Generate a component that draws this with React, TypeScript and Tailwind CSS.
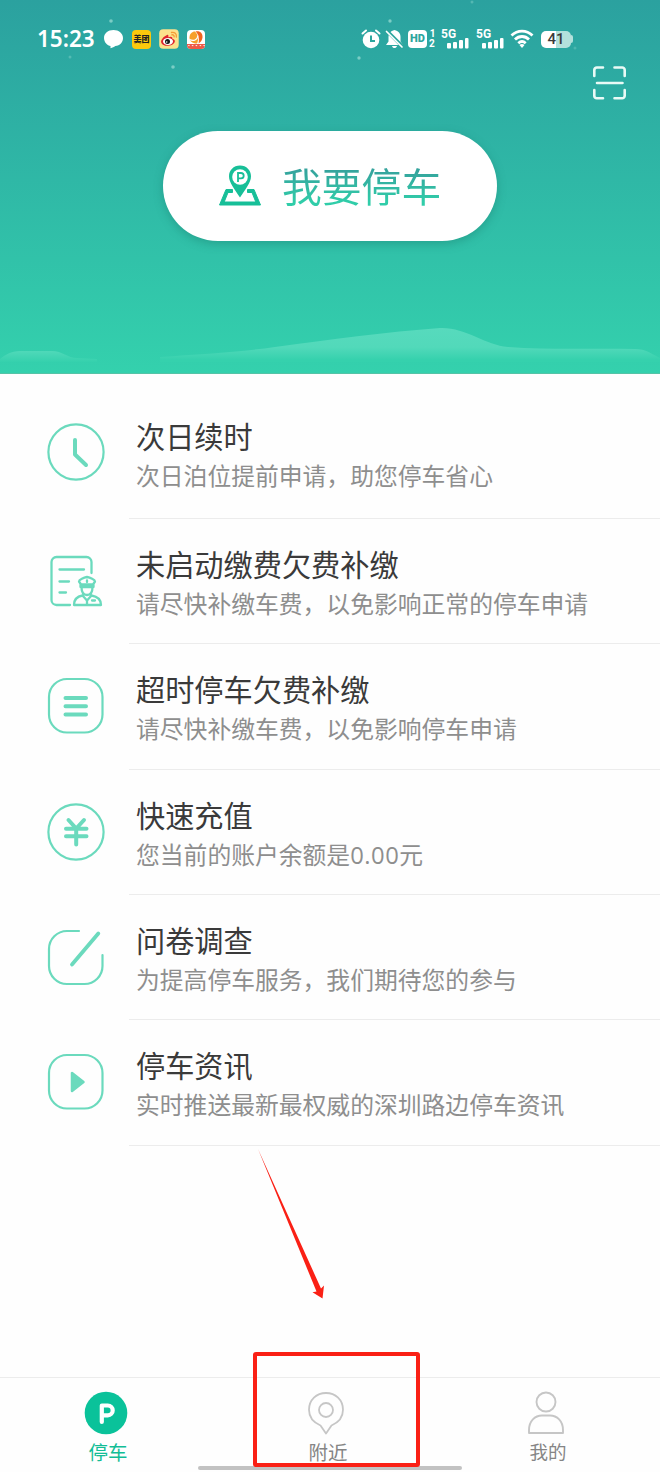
import React from "react";

type MenuItem = {
  id: string;
  title: string;
  desc: React.ReactNode;
  icon: React.ReactNode;
};

const MINT = "#6bdabd";

function ClockIcon() {
  return (
    <svg width="58" height="58" viewBox="0 0 58 58" fill="none" stroke={MINT}>
      <circle cx="29" cy="29" r="27.600" strokeWidth="2.200" />
      <path d="M28 17v14.500l11 10.500" strokeWidth="4" strokeLinecap="round" strokeLinejoin="round" />
    </svg>
  );
}

function OfficerIcon() {
  return (
    <svg width="58" height="58" viewBox="0 0 58 58" fill="none" stroke={MINT} strokeWidth="2.300" strokeLinecap="round" strokeLinejoin="round">
      <path d="M44.500 21V10a5 5 0 0 0-5-5H9.500a5 5 0 0 0-5 5v38a5 5 0 0 0 5 5H23" />
      <path d="M12.500 17.500H37M12.500 29.500h9.500M12.500 40.500h6.500" />
      {/* officer */}
      <path d="M32 29.500c0-2 5-4 8-4.500 3 .5 8 2.500 8 4.500l-2 3H34zM33.500 32.500h13v2.500h-13zM34.500 35c0 5 2 8 5.500 8s5.500-3 5.500-8M27 53c0-6 3-8.500 8.500-9.500L40 48.500l4.500-5c5.500 1 9.500 3.500 9.500 9.500z" />
      <path d="M40 28.500v1.500M40 48.500v3.500M45 48.500h3" />
    </svg>
  );
}

function ListIcon() {
  return (
    <svg width="58" height="58" viewBox="0 0 58 58" fill="none" stroke={MINT}>
      <rect x="2" y="2" width="53.500" height="53.500" rx="18" strokeWidth="2.200" />
      <path d="M18.500 21H39M18.500 29.300H39M18.500 37.500H39" strokeWidth="4" strokeLinecap="round" />
    </svg>
  );
}

function YuanIcon() {
  return (
    <svg width="58" height="58" viewBox="0 0 58 58" fill="none" stroke={MINT}>
      <circle cx="29" cy="29" r="27.600" strokeWidth="2.200" />
      <path d="M21.500 17l7.700 8.500L37 17M19 25.800h20.500M19 33.200h20.500M29.200 26v15.500" strokeWidth="4" strokeLinecap="round" strokeLinejoin="round" />
    </svg>
  );
}

function SurveyIcon() {
  return (
    <svg width="58" height="58" viewBox="0 0 58 58" fill="none" stroke={MINT} strokeLinecap="round">
      <path d="M32 3H20A18 18 0 0 0 2 21v17a18 18 0 0 0 18 18h17.500a18 18 0 0 0 18-18V27" strokeWidth="2.200" />
      <path d="M51.300 5.500L25 36.500" strokeWidth="3.800" />
    </svg>
  );
}

function NewsIcon() {
  return (
    <svg width="58" height="58" viewBox="0 0 58 58" fill="none" stroke={MINT}>
      <rect x="2" y="2" width="53.500" height="53.500" rx="18" strokeWidth="2.200" />
      <path d="M25 20v18l11.500-9z" fill={MINT} strokeWidth="2.500" strokeLinejoin="round" />
    </svg>
  );
}

const menu: MenuItem[] = [
  { id: "renew", title: "次日续时", desc: "次日泊位提前申请，助您停车省心", icon: <ClockIcon /> },
  { id: "unstarted", title: "未启动缴费欠费补缴", desc: "请尽快补缴车费，以免影响正常的停车申请", icon: <OfficerIcon /> },
  { id: "overtime", title: "超时停车欠费补缴", desc: "请尽快补缴车费，以免影响停车申请", icon: <ListIcon /> },
  {
    id: "recharge",
    title: "快速充值",
    desc: (
      <>
        您当前的账户余额是<span className="font-['Open_Sans',sans-serif] tracking-[0.5px]">0.00</span>元
      </>
    ),
    icon: <YuanIcon />,
  },
  { id: "survey", title: "问卷调查", desc: "为提高停车服务，我们期待您的参与", icon: <SurveyIcon /> },
  { id: "news", title: "停车资讯", desc: "实时推送最新最权威的深圳路边停车资讯", icon: <NewsIcon /> },
];

function Signal() {
  return (
    <div className="relative h-5 w-[28px]">
      <span className="absolute left-0 top-0 font-['Roboto',sans-serif] text-[12px] font-bold leading-[10px]">5G</span>
      <svg className="absolute bottom-0 right-0" width="22" height="12" viewBox="0 0 22 12" fill="#fff">
        <rect x="0" y="6" width="4" height="5.500" rx="1" />
        <rect x="6" y="5" width="4" height="6.500" rx="1" />
        <rect x="12" y="3" width="4" height="8.500" rx="1" />
        <rect x="18" y="1" width="3.500" height="10.500" rx="1" />
      </svg>
    </div>
  );
}

function StatusBar() {
  return (
    <div className="flex h-[78px] items-center pl-[37px] text-white">
      <span className="w-[66px] font-['Noto_Sans',sans-serif] text-[22.500px] font-semibold leading-6">15:23</span>
      <svg width="21" height="20" viewBox="0 0 21 20" fill="#fff">
        <path d="M10.500 1C5 1 1 4.400 1 9c0 4.500 3.500 7.500 6.500 8v2.200c2-.5 3.500-1.200 4.800-2.200C17 16.600 20 13.200 20 9c0-4.600-4.200-8-9.500-8z" />
      </svg>
      <div className="ml-2 flex h-[19px] w-[19px] items-center justify-center rounded bg-[#fbc80c]">
        <span className="whitespace-nowrap font-['Noto_Sans_CJK_SC',sans-serif] text-[8px] font-black leading-none text-[#222]">美团</span>
      </div>
      <svg className="ml-2" width="20" height="20" viewBox="0 0 20 20">
        <rect width="19.500" height="19.500" x=".2" y=".2" rx="4" fill="#fce28c" />
        <path d="M8 6c-3.500 1.500-6.500 5-5.800 7.500.6 2.500 4 3.500 7 3.300 4-.3 7-2.600 6.600-5-.2-1.200-1.500-1.800-2.500-2 .5-2-1.500-2.500-4-1.500C9.700 6.500 9.300 5.500 8 6z" fill="#e0252c" />
        <ellipse cx="9" cy="12.500" rx="5" ry="3.400" fill="#fff" />
        <circle cx="8.500" cy="12.600" r="2.500" fill="#171717" />
        <circle cx="7.700" cy="13" r=".8" fill="#fff" />
        <path d="M12.500 3.500c3-.8 5.500 1.500 4.800 4.500M12.800 5.800c1.500-.3 2.600.8 2.300 2" stroke="#f39b35" strokeWidth="1.300" fill="none" strokeLinecap="round" />
      </svg>
      <div className="relative ml-[8px] h-[19px] w-[18px] overflow-hidden rounded bg-white">
        <svg width="18" height="14" viewBox="0 0 18 14">
          <path d="M8.500 1.500c4.500-1 7.500 2 7 6-.3 2.500-1.500 4.500-4 6C12.500 9 11.500 4 8.500 1.500z" fill="#f0651f" />
          <path d="M8 1.500c3 3 4 8 2 12C5 13.500 2.500 11 2.500 7.500 2.500 4 5 1.500 8 1.500z" fill="#f6a02b" />
          <path d="M2.500 9.500c4 2 8 .5 8.500-4" stroke="#fff" strokeWidth="1.200" fill="none" />
        </svg>
        <div className="absolute inset-x-0 bottom-0 h-[5px] bg-[#ee5a46] text-center">
          <span className="block text-[4px] leading-[4px] tracking-tighter text-white">▪▪▪▪▪</span>
        </div>
      </div>

      <div className="ml-[156px] flex items-center">
        <svg width="20" height="20" viewBox="0 0 20 20">
          <circle cx="10" cy="11" r="8.300" fill="#fff" />
          <path d="M1.500 4.500L5 1.500M18.500 4.500L15 1.500" stroke="#fff" strokeWidth="2" strokeLinecap="round" />
          <path d="M10 6.500V12h4" stroke="#2da69e" strokeWidth="2" fill="none" />
        </svg>
        <svg className="ml-1" width="19" height="20" viewBox="0 0 19 20">
          <path d="M9.500 1c4 .8 6 3.500 6 7v4.500L18 16H1l2.500-3.500V8c0-3.500 2-6.200 6-7zM7 17h5c-.5 1.600-1.300 2-2.500 2S7.500 18.500 7 17z" fill="#fff" />
          <path d="M0 0l19 19" stroke="#2da69e" strokeWidth="3.500" />
          <path d="M1.500 2.500L17 18" stroke="#fff" strokeWidth="1.700" strokeLinecap="round" />
        </svg>
        <div className="ml-[4px] flex h-[18px] w-[19px] items-center justify-center rounded bg-white font-['Roboto',sans-serif] text-[11px] font-black text-[#2da69e]">HD</div>
        <div className="ml-[2px] flex w-[7px] flex-col font-['Roboto',sans-serif] text-[10px] font-bold leading-[10px]">
          <span className="text-center">1</span>
          <span>2</span>
        </div>
        <div className="ml-[5px] flex gap-[7px]">
          <Signal />
          <Signal />
        </div>
        <svg className="ml-[6px]" width="24" height="20" viewBox="0 0 24 20" fill="none" stroke="#fff" strokeWidth="2.800">
          <path d="M1.500 6.500c6-5.800 15-5.800 21 0M5 10.500c4-4 10-4 14 0M8.300 14.200c2.200-2 5.200-2 7.400 0" />
          <path d="M9.500 16L12 19l2.500-3c-1.500-1.300-3.500-1.300-5 0z" fill="#fff" stroke="none" />
        </svg>
        <div className="ml-[7px] flex h-[17px] w-[30px] items-center justify-center rounded-[5px] bg-gradient-to-r from-white from-50% to-[#b4e1dc] to-50% font-['Roboto',sans-serif] text-[15px] font-medium leading-none text-[#3a3a3a]">
          41
        </div>
        <div className="h-2 w-[2px] rounded-r bg-[#b4e1dc]" />
      </div>
    </div>
  );
}

function Hero() {
  return (
    <header className="relative h-[374px] bg-gradient-to-b from-[#2ba19f] to-[#34d1ad]">
      {/* stars and hills */}
      <svg className="absolute inset-0" width="660" height="374" viewBox="0 0 660 374">
        <defs>
          <linearGradient id="hill" x1="0" y1="328" x2="0" y2="360" gradientUnits="userSpaceOnUse">
            <stop offset="0" stopColor="#57dabd" />
            <stop offset=".6" stopColor="#52d9ba" />
            <stop offset="1" stopColor="#35d1ad" />
          </linearGradient>
          <linearGradient id="mound" x1="0" y1="350" x2="0" y2="362" gradientUnits="userSpaceOnUse">
            <stop offset="0" stopColor="#52d9ba" />
            <stop offset="1" stopColor="#35d1ad" />
          </linearGradient>
        </defs>
        <g fill="#7bcdc5">
          <circle cx="111" cy="21" r="1.800" />
          <circle cx="173" cy="67" r="1.800" />
          <circle cx="70" cy="57" r="1.500" opacity=".5" />
          <circle cx="390" cy="21" r="1.700" />
          <circle cx="359" cy="58" r="1.700" />
          <circle cx="472" cy="2" r="1.500" opacity=".5" />
          <circle cx="575" cy="48" r="1.500" opacity=".4" />
        </g>
        <path d="M0 359c5-4 11-8 20-8h32c10 0 16 7 25 7l20 1v3H0z" fill="url(#mound)" />
        <path d="M160 357c40-3 80-5 115-10 60-8 110-15 165-19 25-1 45 17 68 19 42 3 85 1 127 2 11 0 17 5 25 9v4H160z" fill="url(#hill)" />
        <rect y="373" width="660" height="1" fill="#56c3a6" />
      </svg>

      <div className="relative">
        <StatusBar />
        <svg className="absolute left-[592px] top-[65px]" width="36" height="36" viewBox="0 0 36 36" fill="none" stroke="#e9faf6" strokeWidth="2.600" strokeLinecap="round" strokeLinejoin="round">
          <path d="M2.300 11V5a2.500 2.500 0 0 1 2.500-2.500H11M22.500 2.500H30A2.500 2.500 0 0 1 32.700 5v6M2.300 25v6A2.500 2.500 0 0 0 4.800 33.300H11M22.500 33.300H30a2.500 2.500 0 0 0 2.700-2.500V25M5 18h25.500" />
        </svg>
        <button className="mx-auto mt-[53px] flex h-[110px] w-[334px] items-center rounded-full bg-white pl-[55px] shadow-[0_3px_10px_rgba(20,110,95,0.35)]">
          <svg width="44" height="42" viewBox="0 0 44 42">
            <path d="M14.500 24.500H8L1.500 40h41L36 24.500h-6.500V27.500h4.500l3.800 9.500H6.200L10 27.500h4.500z" fill="#17bf98" stroke="#17bf98" strokeWidth="1" />
            <path d="M22 0.500C15.500 0.500 11 5.300 11 11.200 11 17.500 16.500 24 22 32.500c5.500-8.500 11-15 11-21.300C33 5.300 28.500 .5 22 .5z" fill="#17bf98" />
            <circle cx="22" cy="12" r="7.800" fill="#fff" />
            <path d="M20 17V8h3a2.700 2.700 0 0 1 0 5.400h-3" fill="none" stroke="#17bf98" strokeWidth="1.800" />
          </svg>
          <span className="mb-[2px] ml-[20px] bg-gradient-to-b from-[#35a49d] from-25% to-[#30cda9] to-80% bg-clip-text text-[39.8px] leading-[56px] text-transparent">我要停车</span>
        </button>
      </div>
    </header>
  );
}

export default function App() {
  return (
    <div className="relative flex h-[1472px] w-[660px] flex-col overflow-hidden bg-[#fefefe] font-['Noto_Sans_CJK_SC',sans-serif]">
      <Hero />

      {/* Menu */}
      <main className="flex-1">
        {menu.map((m, i) => (
          <div key={m.id} className={`flex pl-[47px] ${i === 0 ? "h-[145.2px]" : "h-[125.3px]"}`}>
            <div className={`w-[82px] shrink-0 ${i === 0 ? "pt-[49px]" : "pt-[33px]"}`}>{m.icon}</div>
            <div className={`flex-1 border-b border-[#ececec] pl-[7px] ${i === 0 ? "pt-[41px]" : "pt-[24px]"}`}>
              <h2 className="whitespace-nowrap text-[29.2px] leading-[40px] text-[#3a3a3a]">{m.title}</h2>
              <p className="whitespace-nowrap text-[23.8px] leading-[40px] text-[#8e8e8e]">{m.desc}</p>
            </div>
          </div>
        ))}
      </main>

      {/* Tab bar */}
      <nav className="flex h-[95px] border-t border-[#ececec] pt-[13px] text-[19.5px] leading-[28px] text-[#858585]">
        <div className="flex w-[216px] flex-col items-center text-[#12bd96]">
          <svg className="mr-[4px]" width="44" height="44" viewBox="0 0 44 44">
            <circle cx="22" cy="22" r="21.300" fill="#0ac29a" />
            <path d="M17.800 31V14.500h6a4.900 4.900 0 0 1 0 9.800h-6" fill="none" stroke="#fff" strokeWidth="4.200" strokeLinejoin="round" strokeLinecap="round" />
          </svg>
          <span className="mt-[3px]">停车</span>
        </div>
        <div className="flex w-[224px] flex-col items-center">
          <svg className="mr-[4px]" width="44" height="44" viewBox="0 0 44 44" fill="none" stroke="#c6c6c6" strokeWidth="1.800" strokeLinejoin="round">
            <path d="M22 42.500l-5.500-8C9.500 31.500 5 26 5 18.800 5 9 12.500 2 22 2s17 7 17 16.800c0 7.200-4.500 12.700-11.500 15.700z" />
            <circle cx="22" cy="19" r="7" />
          </svg>
          <span className="mt-[3px]">附近</span>
        </div>
        <div className="flex w-[216px] flex-col items-center">
          <svg className="mr-[4px]" width="44" height="44" viewBox="0 0 44 44" fill="none" stroke="#c6c6c6" strokeWidth="1.900" strokeLinejoin="round">
            <circle cx="22" cy="11" r="9.500" />
            <path d="M5 42V39c0-9 6-14.500 13-14.500h8C33 24.500 39 30 39 39v3z" />
          </svg>
          <span className="mt-[2px] text-[18.5px]">我的</span>
        </div>
      </nav>

      {/* Home indicator */}
      <div className="absolute left-[198px] top-[1466px] h-1 w-[264px] rounded-full bg-[#c2c2c2]" />

      {/* Callout for the nearby tab */}
      <div className="absolute left-[253px] top-[1352px] h-[115px] w-[167px] rounded-[3px] border-4 border-[#fa2015]" />
      <svg className="absolute left-[250px] top-[1145px]" width="90" height="160" viewBox="0 0 90 160">
        <path d="M8 4L71 143.500l3-3L72.500 153.500 62.500 147.200l4-.7z" fill="#fa2015" />
      </svg>
    </div>
  );
}
